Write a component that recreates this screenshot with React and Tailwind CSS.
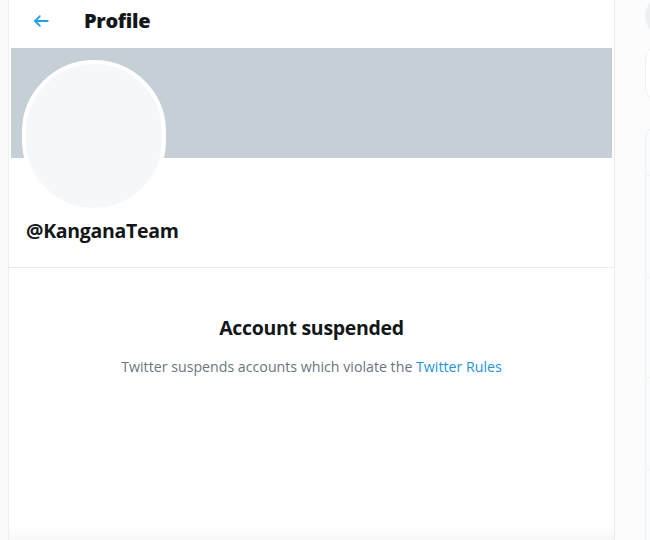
import React from "react";

export default function App() {
  const font = { fontFamily: '"Open Sans", "Noto Sans", sans-serif' };
  return (
    <div className="w-[650px] h-[540px] bg-[#fbfbfb] flex overflow-hidden" style={font}>
      <div className="w-[9px] shrink-0 border-r border-[#eceff1]" />
      <div className="w-[606px] shrink-0 bg-white border-r border-[#e6ecf0] flex flex-col">
        <div className="h-[48px] flex items-center pl-[23px] pb-[6px]">
          <svg width="18" height="18" viewBox="0 0 24 24" className="mr-[34px]" fill="none" stroke="#1da1f2" strokeWidth="2.4" strokeLinecap="round" strokeLinejoin="round">
            <path d="M21 12H4" />
            <path d="M10.5 5.5L4 12l6.5 6.5" />
          </svg>
          <span className="text-[20px] font-black text-[#14171a] tracking-[-0.3px] leading-none">Profile</span>
        </div>
        <div className="h-[110px] bg-[#c4cfd6] mx-[2px]" />
        <div className="relative h-[110px] border-b border-[#e6ecf0]">
          <div className="absolute left-[13px] top-[-98px] w-[144px] h-[152px] rounded-full bg-[#f5f8fa] border-[4px] border-white" />
          <div className="absolute left-[17px] top-[58px] text-[19.5px] font-bold text-[#14171a] tracking-[-0.3px]">@KanganaTeam</div>
        </div>
        <div className="flex flex-col items-center pt-[45px]">
          <div className="text-[19.5px] font-bold text-[#14171a] tracking-[-0.3px]">Account suspended</div>
          <div className="mt-[14px] text-[14.2px] text-[#6b7580]">
            Twitter suspends accounts which violate the <span className="text-[#1b95e0]">Twitter Rules</span>
          </div>
        </div>
        <div className="flex-1" />
        <div className="h-[14px] bg-gradient-to-b from-white to-[#f7f7f7]" />
      </div>
      <div className="flex-1 relative bg-[#fcfcfd]">
        <div className="absolute left-[30px] top-[-4px] w-[300px] h-[40px] rounded-full bg-[#eef1f3]" />
        <div className="absolute left-[30px] top-[45px] w-[300px] h-[56px] rounded-[14px] border border-[#eef0f2] bg-white" />
        <div className="absolute left-[30px] top-[125px] w-[300px] h-[430px] rounded-[14px] border border-[#eef0f2] bg-[#fbfcfd]">
          <div className="h-[50px] border-b border-[#f1f3f4]" />
          <div className="h-[102px] border-b border-[#f1f3f4]" />
          <div className="h-[100px] border-b border-[#f1f3f4]" />
          <div className="h-[92px] border-b border-[#f1f3f4]" />
        </div>
      </div>
    </div>
  );
}
